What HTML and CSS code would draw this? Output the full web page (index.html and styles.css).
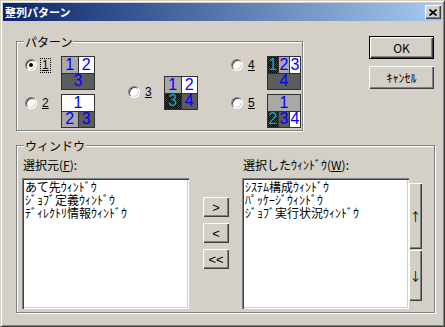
FILE: index.html
```html
<!DOCTYPE html>
<html lang="ja">
<head>
    <meta charset="UTF-8">
    <meta name="viewport" content="width=device-width, initial-scale=1.0">
    <title>整列パターン</title>
    <link rel="stylesheet" href="styles.css">
</head>
<body>
    <div class="window">
        <div class="titlebar">
            <span class="title">整列パターン</span>
            <button class="caption-btn" aria-label="閉じる">
                <svg width="8" height="7" viewBox="0 0 8 7">
                    <path d="M0.5 0.5L7.5 6.5M7.5 0.5L0.5 6.5" stroke="#000" stroke-width="1.7" fill="none"/>
                </svg>
            </button>
        </div>

        <div class="client">
            <div class="top-row">
                <div class="group pattern-group">
                    <span class="legend">パターン</span>

                    <div class="pattern-col">
                        <label class="pattern-item">
                            <span class="choice"><span class="radio checked"></span><span class="num focus"><u>1</u></span></span>
                            <span class="pat">
                                <span class="cell gray">1</span>
                                <span class="cell white">2</span>
                                <span class="cell dark wide">3</span>
                            </span>
                        </label>
                        <label class="pattern-item">
                            <span class="choice"><span class="radio"></span><span class="num"><u>2</u></span></span>
                            <span class="pat">
                                <span class="cell white wide">1</span>
                                <span class="cell gray">2</span>
                                <span class="cell dark">3</span>
                            </span>
                        </label>
                    </div>

                    <div class="pattern-col mid">
                        <label class="pattern-item">
                            <span class="choice"><span class="radio"></span><span class="num"><u>3</u></span></span>
                            <span class="pat">
                                <span class="cell gray">1</span>
                                <span class="cell white">2</span>
                                <span class="cell dith">3</span>
                                <span class="cell dark">4</span>
                            </span>
                        </label>
                    </div>

                    <div class="pattern-col">
                        <label class="pattern-item">
                            <span class="choice"><span class="radio"></span><span class="num"><u>4</u></span></span>
                            <span class="pat three">
                                <span class="cell dith">1</span>
                                <span class="cell gray">2</span>
                                <span class="cell white">3</span>
                                <span class="cell dark wide">4</span>
                            </span>
                        </label>
                        <label class="pattern-item">
                            <span class="choice"><span class="radio"></span><span class="num"><u>5</u></span></span>
                            <span class="pat three">
                                <span class="cell gray wide">1</span>
                                <span class="cell dith">2</span>
                                <span class="cell dark">3</span>
                                <span class="cell white">4</span>
                            </span>
                        </label>
                    </div>
                </div>

                <div class="dialog-buttons">
                    <button class="btn btn-default">OK</button>
                    <button class="btn">ｷｬﾝｾﾙ</button>
                </div>
            </div>

            <div class="group window-group">
                <span class="legend">ウィンドウ</span>

                <div class="pane">
                    <div class="pane-label">選択元(<u>F</u>):</div>
                    <div class="listbox">
                        <div>あて先ｳｨﾝﾄﾞｳ</div>
                        <div>ｼﾞｮﾌﾞ定義ｳｨﾝﾄﾞｳ</div>
                        <div>ﾃﾞｨﾚｸﾄﾘ情報ｳｨﾝﾄﾞｳ</div>
                    </div>
                </div>

                <div class="move-buttons">
                    <button class="btn btn-small">&gt;</button>
                    <button class="btn btn-small">&lt;</button>
                    <button class="btn btn-small">&lt;&lt;</button>
                </div>

                <div class="pane">
                    <div class="pane-label">選択したｳｨﾝﾄﾞｳ(<u>W</u>):</div>
                    <div class="list-row">
                        <div class="listbox">
                            <div>ｼｽﾃﾑ構成ｳｨﾝﾄﾞｳ</div>
                            <div>ﾊﾟｯｹｰｼﾞｳｨﾝﾄﾞｳ</div>
                            <div>ｼﾞｮﾌﾞ実行状況ｳｨﾝﾄﾞｳ</div>
                        </div>
                        <div class="order-buttons">
                            <button class="btn btn-order">↑</button>
                            <button class="btn btn-order down">↓</button>
                        </div>
                    </div>
                </div>
            </div>
        </div>
    </div>
</body>
</html>
```

FILE: styles.css
```css
body {
    margin: 0;
    font-family: "Noto Sans CJK JP", sans-serif;
    font-size: 12px;
    color: #000;
    background-color: #d4d0c8;
}
.window {
    width: 445px;
    height: 327px;
    box-sizing: border-box;
    padding: 2px;
    background-color: #d4d0c8;
    border: 1px solid;
    border-color: #d4d0c8 #404040 #404040 #d4d0c8;
    box-shadow: inset 1px 1px 0 #fff, inset -1px -1px 0 #808080;
}
.titlebar {
    height: 18px;
    display: flex;
    align-items: center;
    justify-content: space-between;
    padding: 0 1px;
    background: linear-gradient(to right, #0a246a, #a6caf0);
}
.title {
    color: #fff;
    font-weight: bold;
    font-size: 11px;
    line-height: 18px;
    padding-left: 1px;
}
.caption-btn {
    width: 16px;
    height: 14px;
    padding: 0;
    border: none;
    background-color: #d4d0c8;
    box-shadow: inset 1px 1px 0 #fff, inset -1px -1px 0 #404040, inset -2px -2px 0 #808080;
    display: flex;
    align-items: center;
    justify-content: center;
}
.client {
    padding: 15px 0 0 13px;
}
.top-row {
    display: flex;
    align-items: flex-start;
}

/* group box with etched frame */
.group {
    position: relative;
    box-sizing: border-box;
    border: 1px solid #808080;
    box-shadow: inset 1px 1px 0 #fff, 1px 1px 0 #fff;
}
.legend {
    position: absolute;
    top: -7px;
    left: 7px;
    padding: 0 1px;
    line-height: 14px;
    background-color: #d4d0c8;
}
.pattern-group {
    width: 287px;
    height: 90px;
    margin-top: 5px;
    padding: 14px 0 0 8px;
    display: grid;
    grid-template-columns: 103px 103px auto;
}
.pattern-col {
    display: flex;
    flex-direction: column;
    gap: 4px;
}
.pattern-col.mid {
    justify-content: center;
}
.pattern-item {
    display: flex;
    align-items: flex-start;
}
.choice {
    display: flex;
    align-items: center;
    width: 36px;
    height: 16px;
    margin-top: 1px;
    flex: none;
}
.mid .choice {
    margin-top: 8px;
}
.radio {
    position: relative;
    width: 12px;
    height: 12px;
    box-sizing: border-box;
    flex: none;
    border-radius: 50%;
    background-color: #fff;
    border: 1px solid;
    border-color: #808080 #fff #fff #808080;
    box-shadow: inset 1px 1px 0 #404040, inset -1px -1px 0 #d4d0c8;
}
.radio.checked::after {
    content: "";
    position: absolute;
    left: 3px;
    top: 3px;
    width: 4px;
    height: 4px;
    border-radius: 50%;
    background-color: #000;
}
.num {
    margin-left: 3px;
    padding: 1px 2px;
    line-height: 13px;
    font-family: "Liberation Sans", sans-serif;
    font-size: 12px;
}
.num.focus {
    outline: 1px dotted #000;
    outline-offset: -1px;
}

/* pattern thumbnails */
.pat {
    display: grid;
    grid-template-columns: 1fr 1fr;
    grid-template-rows: 1fr 1fr;
    gap: 1px;
    width: 34px;
    height: 34px;
    box-sizing: border-box;
    flex: none;
    border: 1px solid #303030;
    background-color: #303030;
}
.pat.three {
    grid-template-columns: repeat(3, 1fr);
}
.cell {
    display: flex;
    align-items: center;
    justify-content: center;
    overflow: hidden;
    font-family: "Liberation Sans", sans-serif;
    font-size: 16px;
    line-height: 1;
    color: #0000ff;
}
.cell.wide {
    grid-column: 1 / -1;
}
.gray {
    background-color: #a8a8a8;
}
.white {
    background-color: #fff;
}
.dark {
    background-color: #5c5c5c;
}
.dith {
    background: repeating-conic-gradient(#000 0 25%, #3a3a3a 0 50%) 0 0 / 2px 2px;
    color: #00b4b4;
}

/* buttons */
.dialog-buttons {
    display: flex;
    flex-direction: column;
    gap: 7px;
    margin-left: 66px;
}
.btn {
    width: 65px;
    height: 23px;
    padding: 0;
    border: none;
    background-color: #d4d0c8;
    font-family: "Noto Sans CJK JP", sans-serif;
    font-size: 12px;
    color: #000;
    box-shadow: inset 1px 1px 0 #fff, inset -1px -1px 0 #404040, inset -2px -2px 0 #808080;
}
.btn-default {
    border: 1px solid #000;
}
.btn-small {
    width: 26px;
    height: 20px;
    font-family: "Liberation Sans", sans-serif;
    font-size: 13px;
}
.btn-order {
    width: 13px;
    height: 66px;
}
.btn-order.down {
    height: 51px;
}

/* window lists */
.window-group {
    width: 419px;
    margin-top: 14px;
    padding: 12px 0 3px 5px;
    display: flex;
    align-items: flex-start;
}
.pane-label {
    line-height: 14px;
    padding-left: 1px;
    margin-bottom: 6px;
    white-space: nowrap;
}
.listbox {
    width: 167px;
    height: 131px;
    box-sizing: border-box;
    padding: 2px 3px;
    background-color: #fff;
    line-height: 13px;
    white-space: nowrap;
    overflow: hidden;
    box-shadow: inset 1px 1px 0 #808080, inset 2px 2px 0 #404040, inset -1px -1px 0 #fff, inset -2px -2px 0 #d4d0c8;
}
.move-buttons {
    display: flex;
    flex-direction: column;
    gap: 6px;
    margin: 0 13px 0 14px;
    padding-top: 39px;
}
.list-row {
    display: flex;
    align-items: flex-start;
}
.order-buttons {
    display: flex;
    flex-direction: column;
    gap: 1px;
    margin-top: 5px;
}
```
